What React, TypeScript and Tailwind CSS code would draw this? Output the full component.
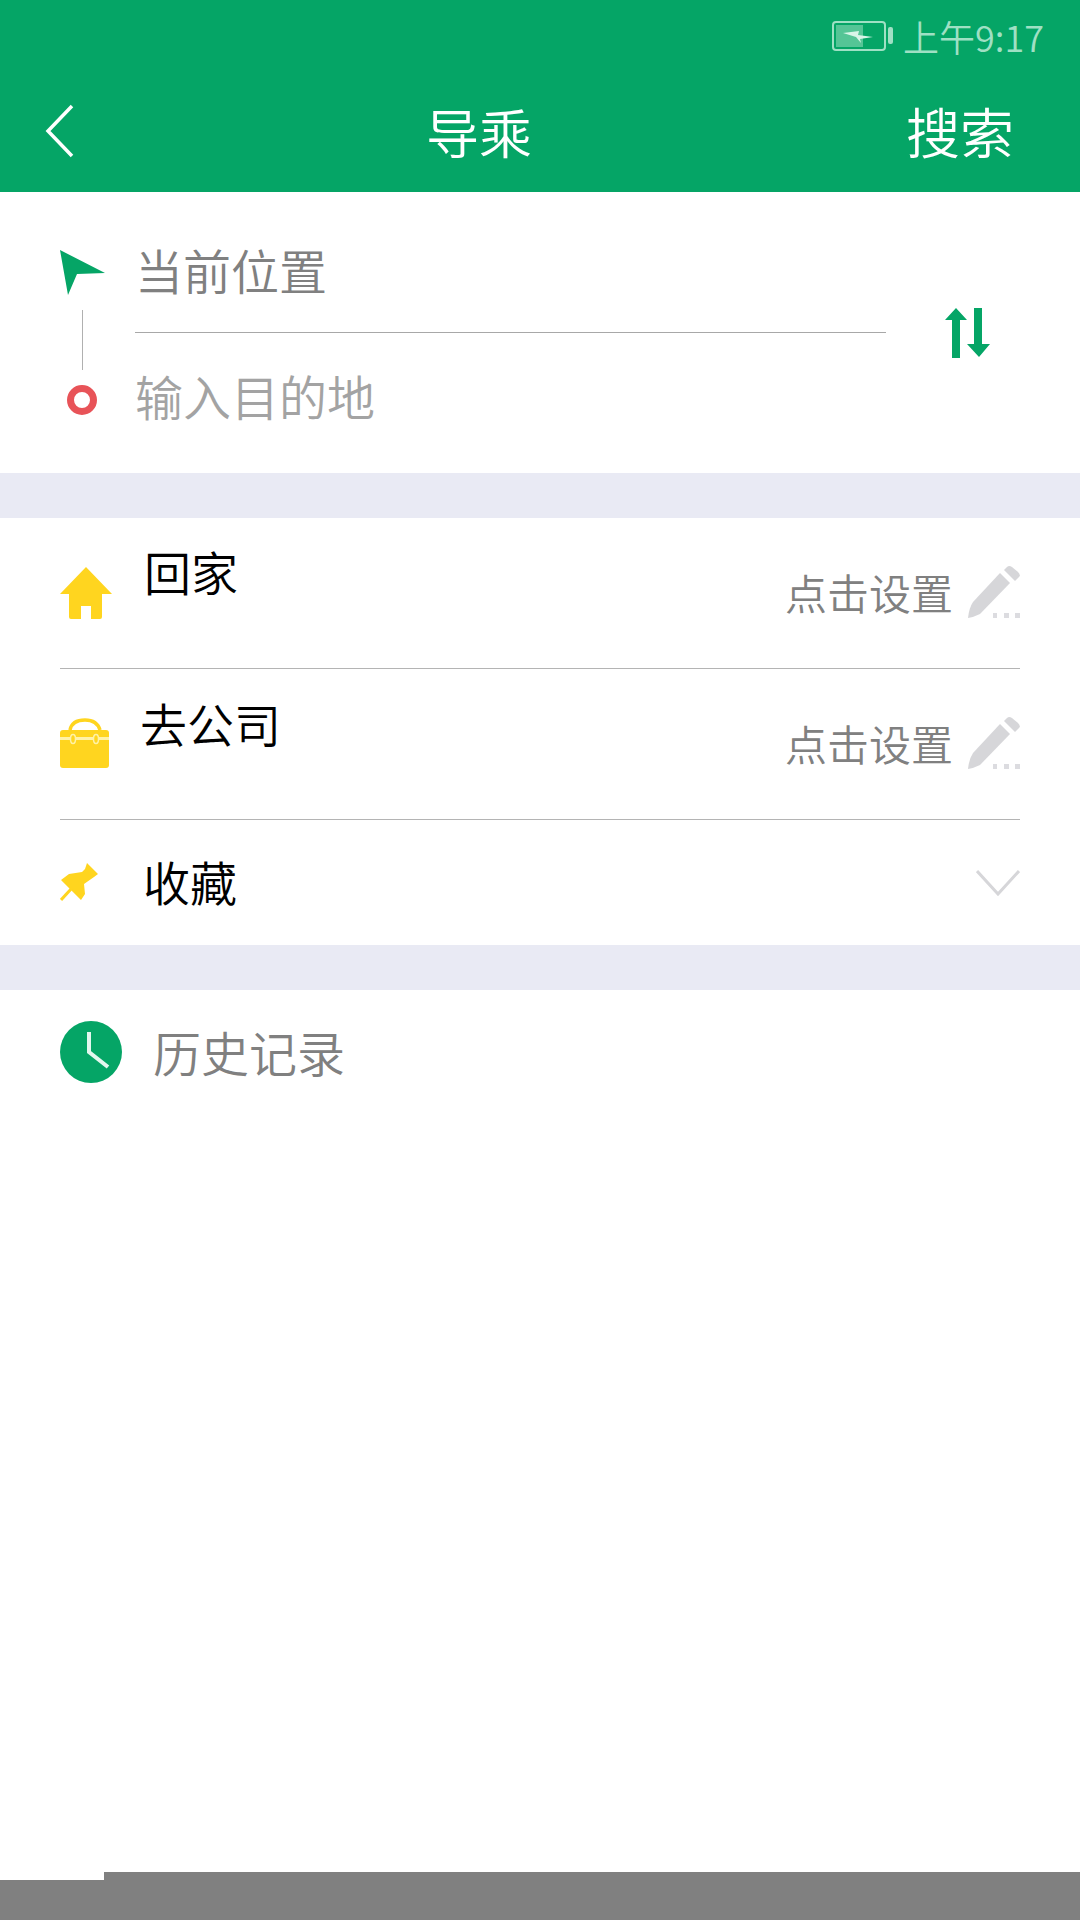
const cjk = "font-['Noto_Sans_CJK_SC','Noto_Sans',sans-serif]";

function Pencil() {
  return (
    <svg width="52" height="52" viewBox="0 0 52 52" className="shrink-0">
      <path d="M0 52 Q1 42 5 36 L32 7 L42 17 L12 48 Q6 51 0 52Z" fill="#d6d6d9" />
      <path d="M36 4 L39 1 Q41 -1 44 1 L50 6 Q53 9 51 11 L47 15Z" fill="#d6d6d9" />
      <rect x="25" y="47" width="4" height="5" fill="#dcdce0" />
      <rect x="36" y="47" width="5" height="5" fill="#dcdce0" />
      <rect x="47" y="47" width="5" height="5" fill="#dcdce0" />
    </svg>
  );
}

function SetHint() {
  return (
    <div className="flex items-center gap-[15px]">
      <span className="text-[42px] leading-[52px] text-[#808080] font-[350]">点击设置</span>
      <Pencil />
    </div>
  );
}

export default function App() {
  return (
    <div className={`${cjk} w-[1080px] h-[1920px] bg-white flex flex-col overflow-hidden`}>
      <header className="h-[192px] bg-[#05a566] flex flex-col shrink-0">
        <div className="h-[74px] flex items-center justify-end pr-[36px] pb-[3px]">
          <svg width="62" height="30" viewBox="0 0 62 30" className="mr-[9px]">
            <rect x="1" y="1" width="52" height="28" rx="3" fill="none" stroke="#9fe0c4" strokeWidth="2" />
            <rect x="4" y="4" width="27" height="22" fill="#55c596" />
            <path d="M11 12 L27 10 L26 14 L41 16 L28 18 L29 22 L24 16Z" fill="#d8f5e8" />
            <rect x="56" y="6" width="5" height="17" rx="2" fill="#9fe0c4" />
          </svg>
          <span className="text-[36px] leading-[40px] text-[#9fe0c4] font-[350]">上午9:17</span>
        </div>
        <div className="flex-1 flex items-center pl-[44px] pr-[66px] pb-[4px]">
          <svg width="32" height="54" viewBox="0 0 32 54" className="shrink-0">
            <path d="M28 2 L4 27 L28 52" fill="none" stroke="#ffffff" strokeWidth="3.5" />
          </svg>
          <span className="ml-[350px] text-[53px] leading-[60px] text-white font-[350]">导乘</span>
          <span className="ml-auto text-[54px] leading-[60px] text-white font-[350]">搜索</span>
        </div>
      </header>

      <section className="h-[281px] flex shrink-0">
        <div className="w-[135px] pl-[60px] pt-[58px] flex flex-col shrink-0">
          <svg width="45" height="45" viewBox="0 0 45 45">
            <polygon points="0,0 45,23 17,24 8,45" fill="#05a566" />
          </svg>
          <div className="w-px h-[60px] bg-[#b0b0b0] ml-[22px] mt-[15px]" />
          <div className="w-[30px] h-[30px] rounded-full border-[7px] border-[#e85358] ml-[7px] mt-[15px]" />
        </div>
        <div className="w-[751px] flex flex-col shrink-0">
          <div className="h-[141px] flex items-center pt-[14px] border-b border-[#a8a8a8]">
            <span className="text-[48px] leading-[56px] text-[#808080] font-[350]">当前位置</span>
          </div>
          <div className="flex-1 flex items-center pb-[17px]">
            <span className="text-[48px] leading-[56px] text-[#a3a3a3] font-[350]">输入目的地</span>
          </div>
        </div>
        <div className="flex-1 pl-[59px] pt-[116px]">
          <svg width="46" height="50" viewBox="0 0 46 50">
            <path d="M0 12 L11 0 L22 12 L15 12 L15 50 L7 50 L7 12Z" fill="#05a566" />
            <path d="M29 0 L37 0 L37 36 L45 36 L34 49 L22 36 L29 36Z" fill="#05a566" />
          </svg>
        </div>
      </section>

      <div className="h-[45px] bg-[#e9eaf4] shrink-0" />

      <section className="px-[60px] shrink-0 flex flex-col">
        <div className="h-[151px] flex border-b border-[#b4b4b4]">
          <svg width="52" height="52" viewBox="0 0 52 52" className="mt-[49px] shrink-0">
            <path d="M26 0 L52 27 L42 27 L42 50 Q42 52 40 52 L33 52 L31 52 L31 39 L21 39 L21 52 L11 52 Q9 52 9 50 L9 27 L0 27Z" fill="#ffd51f" />
          </svg>
          <span className="ml-[32px] mt-[23px] text-[47px] leading-[60px] text-black font-[350]">回家</span>
          <div className="ml-auto mt-[48px] self-start"><SetHint /></div>
        </div>
        <div className="h-[151px] flex border-b border-[#b4b4b4]">
          <svg width="50" height="50" viewBox="0 0 50 50" className="mt-[49px] shrink-0">
            <path d="M10 12 Q12 2 25 2 Q37 2 40 12" fill="none" stroke="#ffd51f" strokeWidth="3.5" />
            <rect x="0" y="12" width="49" height="38" rx="3" fill="#ffd51f" />
            <rect x="0" y="19" width="49" height="3" fill="#fff2a8" />
            <ellipse cx="13" cy="21" rx="2.5" ry="4.5" fill="#ffd51f" stroke="#fff2a8" strokeWidth="1.5" />
            <ellipse cx="36" cy="21" rx="2.5" ry="4.5" fill="#ffd51f" stroke="#fff2a8" strokeWidth="1.5" />
          </svg>
          <span className="ml-[30px] mt-[24px] text-[47px] leading-[60px] text-black font-[350]">去公司</span>
          <div className="ml-auto mt-[48px] self-start"><SetHint /></div>
        </div>
        <div className="h-[125px] flex">
          <svg width="38" height="38" viewBox="0 0 38 38" className="mt-[43px] shrink-0">
            <path d="M27 0 L38 11 L34 14 L24 21 L25 31 L21 37 L11 27 L1 17 L9 11 L22 9 L25 6Z" fill="#ffd51f" />
            <path d="M1 37 L12 25" stroke="#ffd51f" strokeWidth="3" />
          </svg>
          <span className="ml-[45px] mt-[31px] text-[47px] leading-[60px] text-black font-[350]">收藏</span>
          <svg width="44" height="26" viewBox="0 0 44 26" className="ml-auto mt-[50px] shrink-0">
            <path d="M1 1 L22 24 L43 1" fill="none" stroke="#d6d6d9" strokeWidth="3" />
          </svg>
        </div>
      </section>

      <div className="h-[45px] bg-[#e9eaf4] shrink-0" />

      <section className="flex-1 flex items-start pl-[60px] pt-[31px]">
        <svg width="62" height="62" viewBox="0 0 62 62" className="shrink-0">
          <circle cx="31" cy="31" r="31" fill="#05a566" />
          <path d="M29 11 L29 31 L48 46" fill="none" stroke="#e3f7ee" strokeWidth="4" />
        </svg>
        <span className="ml-[31px] mt-0 text-[48px] leading-[60px] text-[#808080] font-[350]">历史记录</span>
      </section>

      <div className="h-[48px] flex items-end shrink-0">
        <div className="w-[96px] h-[40px] bg-[#808080]" />
        <div className="w-[8px] h-[40px] bg-[#808080]" />
        <div className="flex-1 h-[48px] bg-[#808080]" />
      </div>
    </div>
  );
}
